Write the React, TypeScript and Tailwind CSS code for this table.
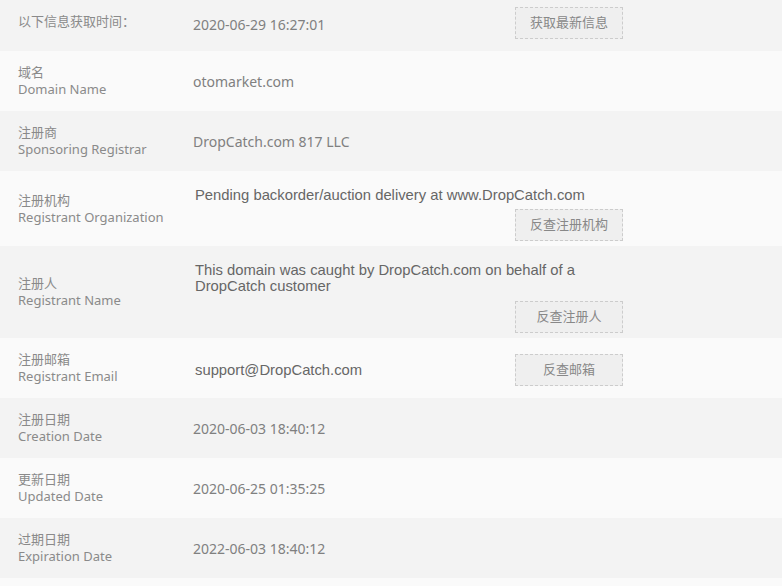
const zh = "font-['Noto_Sans','Noto_Sans_CJK_SC',sans-serif]";
const ar = "font-['Liberation_Sans','Noto_Sans_CJK_SC',sans-serif]";

function Btn({ children }: { children: React.ReactNode }) {
  return (
    <button
      className={`${zh} w-[108px] h-[32px] shrink-0 border border-dashed border-[#cccccc] bg-[#efefef] text-[13px] text-[#888888]`}
    >
      {children}
    </button>
  );
}

function Label({ cn, en }: { cn: string; en: string }) {
  return (
    <div className={`${zh} w-[175px] shrink-0 self-center text-[13px] leading-[17px] text-[#8a8a8a]`}>
      <div>{cn}</div>
      <div>{en}</div>
    </div>
  );
}

const simple = [
  { cn: '域名', en: 'Domain Name', v: 'otomarket.com', bg: 'bg-[#fafafa]' },
  { cn: '注册商', en: 'Sponsoring Registrar', v: 'DropCatch.com 817 LLC', bg: 'bg-[#f3f3f3]' },
];

const dates = [
  { cn: '注册日期', en: 'Creation Date', v: '2020-06-03 18:40:12', bg: 'bg-[#f3f3f3]' },
  { cn: '更新日期', en: 'Updated Date', v: '2020-06-25 01:35:25', bg: 'bg-[#fafafa]' },
  { cn: '过期日期', en: 'Expiration Date', v: '2022-06-03 18:40:12', bg: 'bg-[#f3f3f3]' },
];

export default function App() {
  return (
    <div className="w-[782px] h-[586px] bg-[#fafafa] overflow-hidden">
      {/* fetch time */}
      <div className="h-[51px] bg-[#f3f3f3] flex items-start pl-[18px]">
        <div className={`${zh} w-[175px] pt-[12px] text-[13px] text-[#8a8a8a]`}>以下信息获取时间：</div>
        <div className={`${zh} w-[322px] pt-[14px] text-[14px] text-[#808080]`}>2020-06-29 16:27:01</div>
        <div className="pt-[7px]">
          <Btn>获取最新信息</Btn>
        </div>
      </div>

      {simple.map((r) => (
        <div key={r.en} className={`h-[60px] ${r.bg} flex items-center pl-[18px]`}>
          <Label cn={r.cn} en={r.en} />
          <div className={`${zh} text-[14px] text-[#808080]`}>{r.v}</div>
        </div>
      ))}

      {/* registrant organization */}
      <div className="h-[75px] bg-[#fafafa] flex items-start pl-[18px]">
        <Label cn="注册机构" en="Registrant Organization" />
        <div className="w-[430px] pl-[2px] pt-[16px] flex flex-col">
          <div className={`${ar} text-[14.8px] leading-[17px] text-[#666666]`}>
            Pending backorder/auction delivery at www.DropCatch.com
          </div>
          <div className="flex justify-end mt-[5px]">
            <Btn>反查注册机构</Btn>
          </div>
        </div>
      </div>

      {/* registrant name */}
      <div className="h-[92px] bg-[#f3f3f3] flex items-start pl-[18px]">
        <Label cn="注册人" en="Registrant Name" />
        <div className="w-[430px] pl-[2px] pt-[16px] flex flex-col">
          <div className={`${ar} text-[14.8px] leading-[16px] text-[#666666] w-[385px]`}>
            This domain was caught by DropCatch.com on behalf of a DropCatch customer
          </div>
          <div className="flex justify-end mt-[7px]">
            <Btn>反查注册人</Btn>
          </div>
        </div>
      </div>

      {/* registrant email */}
      <div className="h-[60px] bg-[#fafafa] flex items-start pl-[18px]">
        <Label cn="注册邮箱" en="Registrant Email" />
        <div className="w-[430px] pl-[2px] pt-[16px] flex items-center justify-between">
          <div className={`${ar} text-[14.8px] text-[#666666]`}>support@DropCatch.com</div>
          <Btn>反查邮箱</Btn>
        </div>
      </div>

      {dates.map((r) => (
        <div key={r.en} className={`h-[60px] ${r.bg} flex items-center pl-[18px]`}>
          <Label cn={r.cn} en={r.en} />
          <div className={`${zh} text-[14px] text-[#808080]`}>{r.v}</div>
        </div>
      ))}
    </div>
  );
}
